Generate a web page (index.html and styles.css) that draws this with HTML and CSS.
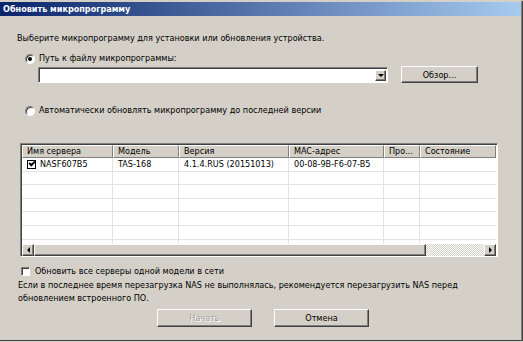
FILE: index.html
```html
<!DOCTYPE html>
<html lang="ru">
<head>
    <meta charset="UTF-8">
    <title>Обновить микропрограмму</title>
    <link rel="stylesheet" href="styles.css">
</head>
<body>
    <div class="dialog">
        <div class="titlebar">Обновить микропрограмму</div>

        <div class="content">
            <p class="intro">Выберите микропрограмму для установки или обновления устройства.</p>

            <label class="option"><span class="radio checked"></span>Путь к файлу микропрограммы:</label>

            <div class="file-row">
                <div class="combo">
                    <div class="combo-field"></div>
                    <span class="combo-arrow"><span class="tri-down"></span></span>
                </div>
                <button class="btn browse">Обзор...</button>
            </div>

            <label class="option auto"><span class="radio"></span>Автоматически обновлять микропрограмму до последней версии</label>

            <div class="list">
                <div class="list-head">
                    <div class="col c1">Имя сервера</div>
                    <div class="col c2">Модель</div>
                    <div class="col c3">Версия</div>
                    <div class="col c4">MAC-адрес</div>
                    <div class="col c5">Про...</div>
                    <div class="col c6">Состояние</div>
                </div>
                <div class="list-body">
                    <div class="row">
                        <div class="cell c1"><span class="check on"></span>NASF607B5</div>
                        <div class="cell c2">TAS-168</div>
                        <div class="cell c3">4.1.4.RUS (20151013)</div>
                        <div class="cell c4">00-08-9B-F6-07-B5</div>
                        <div class="cell c5"></div>
                        <div class="cell c6"></div>
                    </div>
                    <div class="row"><div class="cell c1"></div><div class="cell c2"></div><div class="cell c3"></div><div class="cell c4"></div><div class="cell c5"></div><div class="cell c6"></div></div>
                    <div class="row"><div class="cell c1"></div><div class="cell c2"></div><div class="cell c3"></div><div class="cell c4"></div><div class="cell c5"></div><div class="cell c6"></div></div>
                    <div class="row"><div class="cell c1"></div><div class="cell c2"></div><div class="cell c3"></div><div class="cell c4"></div><div class="cell c5"></div><div class="cell c6"></div></div>
                    <div class="row"><div class="cell c1"></div><div class="cell c2"></div><div class="cell c3"></div><div class="cell c4"></div><div class="cell c5"></div><div class="cell c6"></div></div>
                    <div class="row"><div class="cell c1"></div><div class="cell c2"></div><div class="cell c3"></div><div class="cell c4"></div><div class="cell c5"></div><div class="cell c6"></div></div>
                    <div class="row"><div class="cell c1"></div><div class="cell c2"></div><div class="cell c3"></div><div class="cell c4"></div><div class="cell c5"></div><div class="cell c6"></div></div>
                </div>
                <div class="hscroll">
                    <span class="sb-btn"><span class="tri-left"></span></span>
                    <span class="sb-thumb"></span>
                    <span class="sb-track"></span>
                    <span class="sb-btn"><span class="tri-right"></span></span>
                </div>
            </div>

            <label class="option all"><span class="check"></span>Обновить все серверы одной модели в сети</label>

            <p class="note">Если в последнее время перезагрузка NAS не выполнялась, рекомендуется перезагрузить NAS перед обновлением встроенного ПО.</p>

            <div class="actions">
                <button class="btn disabled">Начать</button>
                <button class="btn">Отмена</button>
            </div>
        </div>
    </div>
</body>
</html>
```

FILE: styles.css
```css
body {
    margin: 0;
    background: #d4d0c8;
    font-family: "DejaVu Sans Condensed", "DejaVu Sans", sans-serif;
    font-stretch: condensed;
    font-size: 9px;
    color: #000;
}
.dialog {
    width: 521px;
    height: 338px;
    background: #d4d0c8;
    border-top: 2px solid #d4d0c8;
    border-right: 1px solid #808080;
    border-bottom: 1px solid #404040;
    box-shadow: 1px 1px 0 #404040;
}
.titlebar {
    height: 14px;
    line-height: 14px;
    padding-left: 3px;
    background: linear-gradient(to right, #0a246a, #a6caf0);
    color: #fff;
    font-weight: bold;
}
.content {
    padding: 0 0 0 20px;
}
.intro {
    margin: 16px 0 0 -3px;
    line-height: 13px;
}
.option {
    display: flex;
    align-items: center;
    height: 13px;
    line-height: 13px;
}
.option:first-of-type {
    margin-top: 7px;
}
.radio {
    width: 8px;
    height: 8px;
    margin: 0 4px 0 5px;
    border-radius: 50%;
    background: #fff;
    border: 1px solid #808080;
    border-right-color: #fff;
    border-bottom-color: #fff;
    box-shadow: 0 0 0 1px #d4d0c8, inset 1px 1px 0 #404040;
    display: inline-flex;
    align-items: center;
    justify-content: center;
}
.radio.checked::after {
    content: "";
    width: 4px;
    height: 4px;
    border-radius: 50%;
    background: #000;
}
.file-row {
    display: flex;
    align-items: center;
    margin-top: 1px;
    padding-left: 18px;
}
.combo {
    display: flex;
    width: 345px;
    height: 13px;
    background: #fff;
    border: 1px solid #808080;
    border-right-color: #fff;
    border-bottom-color: #fff;
    box-shadow: inset 1px 1px 0 #404040;
    padding: 1px 1px 0 2px;
}
.combo-field {
    flex: 1;
}
.combo-arrow {
    width: 9px;
    height: 9px;
    margin-top: 1px;
    border: 1px solid #fff;
    border-right-color: #404040;
    border-bottom-color: #404040;
    box-shadow: inset -1px -1px 0 #808080;
    background: #d4d0c8;
    display: flex;
    align-items: center;
    justify-content: center;
}
.tri-down {
    border-left: 3px solid transparent;
    border-right: 3px solid transparent;
    border-top: 3px solid #000;
}
.btn {
    font: inherit;
    color: #000;
    background: #d4d0c8;
    border: 1px solid #fff;
    border-right-color: #404040;
    border-bottom-color: #404040;
    box-shadow: inset -1px -1px 0 #808080;
    padding: 0;
}
.browse {
    width: 77px;
    height: 17px;
    margin-left: 13px;
}
.option.auto {
    margin-top: 21px;
}
.list {
    width: 474px;
    margin-top: 26px;
    background: #fff;
    border: 1px solid #808080;
    border-right-color: #fff;
    border-bottom-color: #fff;
    box-shadow: inset 1px 1px 0 #404040;
    padding: 1px 1px 0 1px;
}
.list-head,
.row {
    display: flex;
}
.col {
    height: 11px;
    line-height: 11px;
    padding-left: 4px;
    background: #d4d0c8;
    border: 1px solid #fff;
    border-right-color: #808080;
    border-bottom-color: #808080;
    white-space: nowrap;
    overflow: hidden;
}
.c1 { width: 91px; }
.c2 { width: 66px; }
.c3 { width: 110px; }
.c4 { width: 95px; }
.c5 { width: 36px; }
.c6 { flex: 1; }
.list-head .col { box-sizing: border-box; height: 13px; }
.list-body {
    height: 86px;
    overflow: hidden;
}
.row {
    height: 13.6px;
}
.cell {
    box-sizing: border-box;
    padding-left: 5px;
    line-height: 13px;
    border-right: 1px solid #e3e3e3;
    border-bottom: 1px solid #e3e3e3;
    display: flex;
    align-items: center;
    white-space: nowrap;
}
.cell.c6 { border-right: 0; }
.check {
    width: 7px;
    height: 7px;
    margin-right: 4px;
    background: #fff;
    border: 1px solid #808080;
    border-right-color: #fff;
    border-bottom-color: #fff;
    box-shadow: inset 1px 1px 0 #404040;
    position: relative;
}
.cell .check {
    border: 1px solid #000;
    box-shadow: none;
    margin-left: 0;
}
.check.on::after {
    content: "";
    position: absolute;
    left: 1px;
    top: 0;
    width: 4px;
    height: 2px;
    border-left: 2px solid #000;
    border-bottom: 2px solid #000;
    transform: rotate(-45deg);
}
.hscroll {
    display: flex;
    height: 12px;
    margin-top: 0;
}
.sb-btn {
    width: 10px;
    height: 10px;
    background: #d4d0c8;
    border: 1px solid #fff;
    border-right-color: #404040;
    border-bottom-color: #404040;
    box-shadow: inset -1px -1px 0 #808080;
    display: flex;
    align-items: center;
    justify-content: center;
}
.tri-left {
    border-top: 3px solid transparent;
    border-bottom: 3px solid transparent;
    border-right: 3px solid #000;
}
.tri-right {
    border-top: 3px solid transparent;
    border-bottom: 3px solid transparent;
    border-left: 3px solid #000;
}
.sb-thumb {
    width: 390px;
    height: 10px;
    background: #d4d0c8;
    border: 1px solid #fff;
    border-right-color: #404040;
    border-bottom-color: #404040;
    box-shadow: inset -1px -1px 0 #808080;
}
.sb-track {
    flex: 1;
    background-color: #eeece8;
    background-image: repeating-conic-gradient(#d4d0c8 0 25%, #fff 0 50%);
    background-size: 2px 2px;
}
.option.all {
    margin-top: 8px;
}
.option.all .check {
    margin: 0 5px 0 1px;
}
.note {
    margin: 1px 0 0 -2px;
    line-height: 13px;
    width: 470px;
}
.actions {
    display: flex;
    gap: 22px;
    margin: 4px 0 0 137px;
}
.actions .btn {
    width: 95px;
    height: 18px;
}
.btn.disabled {
    color: #a0a0a0;
    text-shadow: 1px 1px 0 #fff;
}
```
